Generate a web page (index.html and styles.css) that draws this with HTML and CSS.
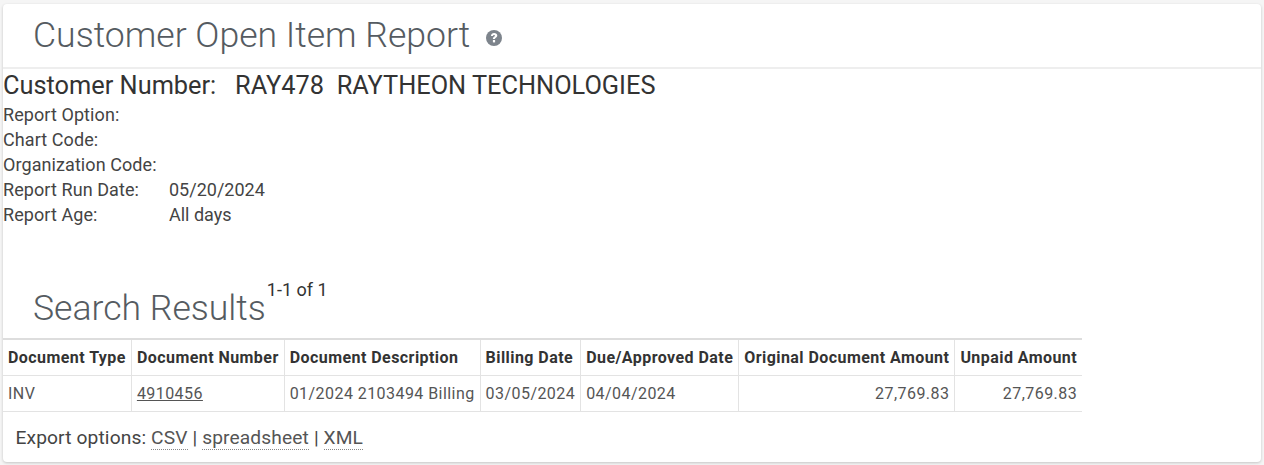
FILE: index.html
```html
<!DOCTYPE html>
<html lang="en">
<head>
    <meta charset="UTF-8">
    <meta name="viewport" content="width=device-width, initial-scale=1.0">
    <title>Customer Open Item Report</title>
    <link rel="stylesheet" href="styles.css">
</head>
<body>
    <div class="card">
        <div class="page-header">
            <h1>Customer Open Item Report</h1>
            <svg class="help-icon" viewBox="0 0 16 16" width="16" height="16" aria-hidden="true">
                <circle cx="8" cy="8" r="8" fill="#7d848c"/>
                <path d="M4.9 5.9C5 4 6.4 3 8.1 3c1.8 0 3.2 1 3.2 2.6 0 1.1-.6 1.7-1.4 2.2-.7.4-.8.6-.8 1.3H6.9c0-1.2.3-1.8 1.1-2.3.6-.4 1-.6 1-1.1 0-.5-.4-.8-.9-.8-.7 0-1 .4-1.1 1z" fill="#fff"/>
                <rect x="6.9" y="10" width="2.2" height="2.4" fill="#fff"/>
            </svg>
        </div>

        <div class="customer-line">Customer Number:&nbsp;&nbsp; RAY478&nbsp; RAYTHEON TECHNOLOGIES</div>
        <div class="report-info">
            <div class="info-row"><span class="info-label">Report Option:</span></div>
            <div class="info-row"><span class="info-label">Chart Code:</span></div>
            <div class="info-row"><span class="info-label">Organization Code:</span></div>
            <div class="info-row"><span class="info-label">Report Run Date:</span><span>05/20/2024</span></div>
            <div class="info-row"><span class="info-label">Report Age:</span><span>All days</span></div>
        </div>

        <div class="results-header">
            <h2>Search Results</h2>
            <span class="results-count">1-1 of 1</span>
        </div>

        <table class="results-table">
            <thead>
                <tr>
                    <th>Document Type</th>
                    <th>Document Number</th>
                    <th>Document Description</th>
                    <th>Billing Date</th>
                    <th>Due/Approved Date</th>
                    <th>Original Document Amount</th>
                    <th>Unpaid Amount</th>
                </tr>
            </thead>
            <tbody>
                <tr>
                    <td>INV</td>
                    <td><a class="doc-link" href="#">4910456</a></td>
                    <td>01/2024 2103494 Billing</td>
                    <td>03/05/2024</td>
                    <td>04/04/2024</td>
                    <td class="amount">27,769.83</td>
                    <td class="amount">27,769.83</td>
                </tr>
            </tbody>
        </table>

        <div class="export-options">
            Export options:
            <a class="export-link" href="#">CSV</a> <span class="sep">|</span>
            <a class="export-link" href="#">spreadsheet</a> <span class="sep">|</span>
            <a class="export-link" href="#">XML</a>
        </div>
    </div>
</body>
</html>
```
FILE: styles.css
```css
html, body {
    margin: 0;
    padding: 0;
}
body {
    background-color: #f5f5f5;
    font-family: Roboto, Arial, sans-serif;
    font-size: 18px;
    color: #333;
    padding: 4px 3px 3px 3px;
}
.card {
    background-color: #fff;
    border-radius: 4px;
    box-shadow: 0 1px 3px rgba(0, 0, 0, 0.2);
    height: 458px;
    overflow: hidden;
}
.page-header {
    display: flex;
    align-items: center;
    height: 61px;
    padding-bottom: 2px;
    padding-left: 30px;
    border-bottom: 2px solid #eee;
}
h1 {
    margin: 0;
    font-size: 35.6px;
    font-weight: 300;
    color: #555b61;
}
.help-icon {
    margin-left: 16px;
    margin-top: 6px;
}
.customer-line {
    font-size: 25.35px;
    line-height: 32px;
    height: 33px;
    color: #333;
}
.info-row {
    display: flex;
    height: 25px;
    line-height: 25px;
    color: #444;
}
.info-label {
    width: 166px;
    letter-spacing: 0.08px;
}
.results-header {
    display: flex;
    align-items: flex-start;
    height: 71px;
    margin-top: 40px;
    padding-left: 30px;
}
h2 {
    margin: 0;
    font-size: 35.6px;
    font-weight: 300;
    line-height: 40px;
    margin-top: 21px;
    color: #555b61;
}
.results-count {
    line-height: 22px;
    margin-left: 1px;
    margin-top: 12px;
}
.results-table {
    border-collapse: collapse;
    font-size: 16px;
    letter-spacing: 0.44px;
}
.results-table th,
.results-table td {
    height: 35px;
    padding: 0 5px;
    border: 1px solid #e3e3e3;
    white-space: nowrap;
    text-align: left;
}
.results-table tr > :first-child {
    border-left: none;
}
.results-table tr > :last-child {
    border-right: none;
}
.results-table thead th {
    border-top: 2px solid #ddd;
    font-weight: 700;
    color: #333;
}
.results-table td {
    color: #555;
}
.results-table td.amount {
    text-align: right;
}
.doc-link {
    color: #555;
    text-decoration: underline;
}
.export-options {
    padding: 14px 12.5px;
    font-size: 19.2px;
    letter-spacing: 0.12px;
    color: #444;
}
.export-link {
    color: #555;
    text-decoration: none;
    border-bottom: 1px dotted #888;
}
.sep {
    color: #444;
}
```
